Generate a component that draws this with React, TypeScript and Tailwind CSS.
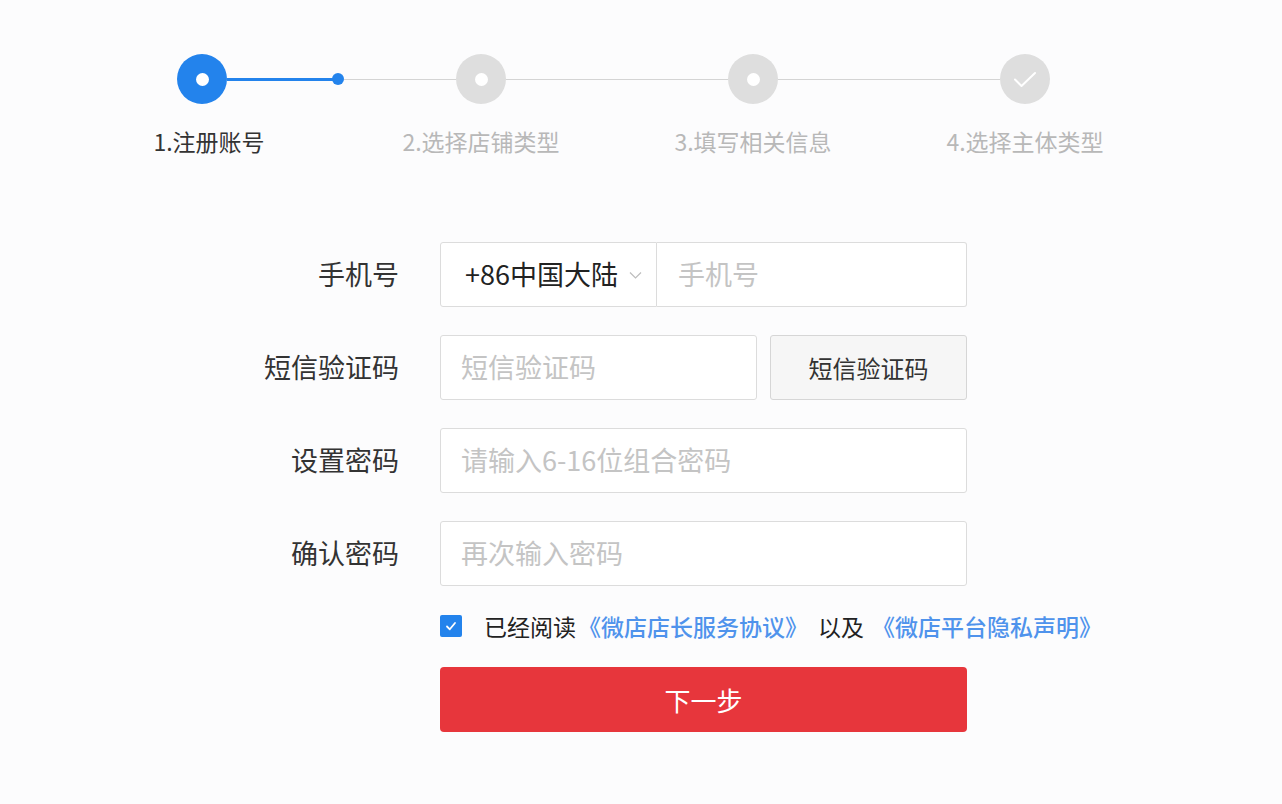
import React from 'react'

const font = { fontFamily: '"Noto Sans CJK SC", "Noto Sans", sans-serif' }

const StepCircle = ({ active, check }: { active?: boolean; check?: boolean }) => (
  <div
    className={`w-[50px] h-[50px] rounded-full flex items-center justify-center shrink-0 ${
      active ? 'bg-[#2383ec]' : 'bg-[#dedede]'
    }`}
  >
    {check ? (
      <svg width="26" height="26" viewBox="0 0 26 26" fill="none">
        <path d="M3 13.5l6.5 6.5L23 7" stroke="#fff" strokeWidth="2" strokeLinecap="round" strokeLinejoin="round" />
      </svg>
    ) : (
      <div className="w-[13px] h-[13px] rounded-full bg-white" />
    )}
  </div>
)

const Row = ({ label, children }: { label: string; children: React.ReactNode }) => (
  <div className="flex items-center">
    <div className="w-[160px] text-right text-[27px] text-[#333] pr-[1px]">{label}</div>
    <div className="ml-[40px] w-[527px] h-[65px] flex">{children}</div>
  </div>
)

export default function App() {
  return (
    <div className="w-[1282px] h-[804px] bg-[#fcfcfd] overflow-hidden" style={font}>
      {/* steps */}
      <div className="pt-[54px] pl-[177px] flex items-center">
        <StepCircle active />
        <div className="w-[229px] flex items-center">
          <div className="w-[106px] h-[3px] bg-[#2383ec]" />
          <div className="w-[12px] h-[12px] rounded-full bg-[#2383ec] -ml-[1px]" />
          <div className="flex-1 h-px bg-[#d4d4d4]" />
        </div>
        <StepCircle />
        <div className="w-[222px] h-px bg-[#d4d4d4]" />
        <StepCircle />
        <div className="w-[222px] h-px bg-[#d4d4d4]" />
        <StepCircle check />
      </div>
      <div className="mt-[22px] pl-[109px] flex gap-[72px] text-[23px] leading-[30px]">
        <div className="w-[200px] text-center text-[#333]">1.注册账号</div>
        <div className="w-[200px] text-center text-[#b8b8b8]">2.选择店铺类型</div>
        <div className="w-[200px] text-center text-[#b8b8b8]">3.填写相关信息</div>
        <div className="w-[200px] text-center text-[#b8b8b8]">4.选择主体类型</div>
      </div>

      {/* form */}
      <div className="mt-[86px] pl-[240px] flex flex-col gap-[28px]">
        <Row label="手机号">
          <div className="w-[217px] h-full border border-[#dcdcdc] rounded-l-[3px] bg-white flex items-center pl-[24px] pr-[14px] text-[27px] text-[#222]">
            <span className="flex-1">+86中国大陆</span>
            <svg width="13" height="8" viewBox="0 0 13 8" fill="none">
              <path d="M1 1.5l5.5 5.5 5.5-5.5" stroke="#bdbdbd" strokeWidth="1.2" />
            </svg>
          </div>
          <div className="flex-1 h-full border border-l-0 border-[#dcdcdc] rounded-r-[3px] bg-white flex items-center pl-[21px] text-[27px] text-[#c4c4c4]">
            手机号
          </div>
        </Row>
        <Row label="短信验证码">
          <div className="w-[317px] h-full border border-[#dcdcdc] rounded-[3px] bg-white flex items-center pl-[20px] text-[27px] text-[#c4c4c4]">
            短信验证码
          </div>
          <div className="ml-[13px] flex-1 h-full border border-[#d6d6d6] rounded-[3px] bg-[#f6f6f6] flex items-center justify-center text-[24px] text-[#333]">
            短信验证码
          </div>
        </Row>
        <Row label="设置密码">
          <div className="flex-1 h-full border border-[#dcdcdc] rounded-[3px] bg-white flex items-center pl-[20px] text-[27px] text-[#c4c4c4]">
            请输入6-16位组合密码
          </div>
        </Row>
        <Row label="确认密码">
          <div className="flex-1 h-full border border-[#dcdcdc] rounded-[3px] bg-white flex items-center pl-[20px] text-[27px] text-[#c4c4c4]">
            再次输入密码
          </div>
        </Row>
      </div>

      <div className="mt-[29px] pl-[440px] flex items-center text-[23px] leading-[22px]">
        <div className="w-[22px] h-[22px] rounded-[2px] bg-[#2383ec] flex items-center justify-center shrink-0">
          <svg width="14" height="14" viewBox="0 0 14 14" fill="none">
            <path d="M3 7.5l2.8 2.8L11 4" stroke="#fff" strokeWidth="1.8" strokeLinecap="round" strokeLinejoin="round" />
          </svg>
        </div>
        <span className="ml-[22px] text-[#222] whitespace-nowrap">已经阅读</span>
        <span className="ml-[2px] text-[#4f93ec] font-medium whitespace-nowrap">《微店店长服务协议》</span>
        <span className="ml-[10px] text-[#222] whitespace-nowrap">以及</span>
        <span className="ml-[8px] text-[#4f93ec] font-medium whitespace-nowrap">《微店平台隐私声明》</span>
      </div>

      <div className="mt-[30px] ml-[440px] w-[527px] h-[65px] rounded-[4px] bg-[#e7363c] flex items-center justify-center text-white text-[26px]">
        下一步
      </div>
    </div>
  )
}
